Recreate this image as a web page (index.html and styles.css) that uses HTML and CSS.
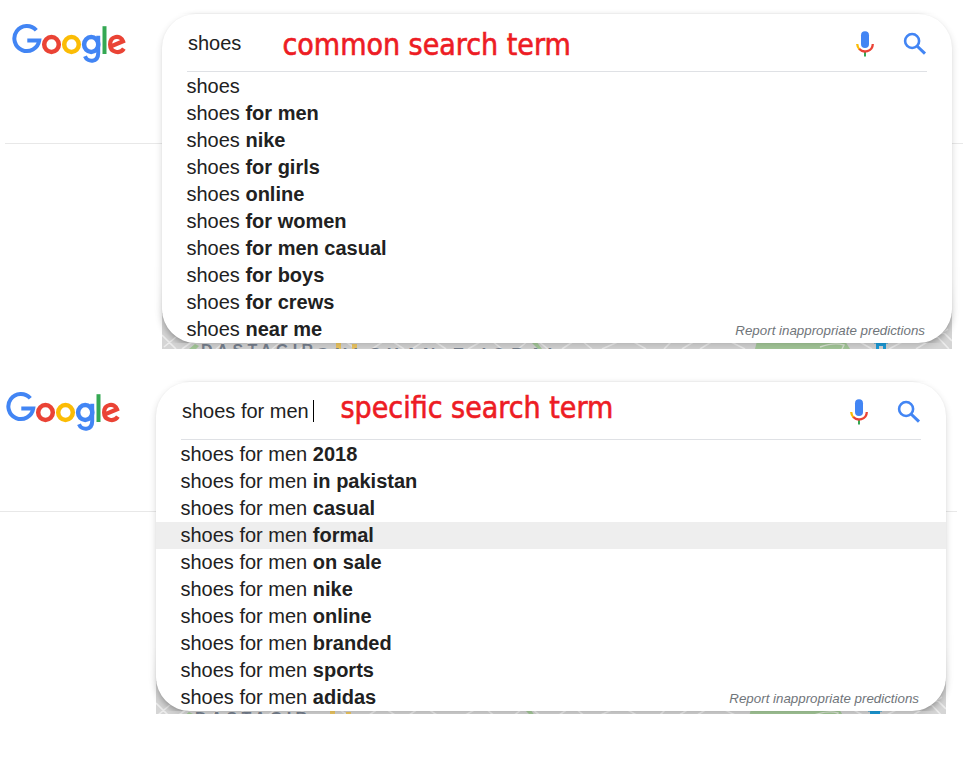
FILE: index.html
```html
<!DOCTYPE html>
<html lang="en">
<head>
<meta charset="utf-8">
<title>Search term suggestions</title>
<link rel="stylesheet" href="styles.css">
</head>
<body>
<svg class="defs" width="0" height="0" aria-hidden="true">
  <symbol id="logo" viewBox="0 0 120 44">
    <g fill="none" stroke-width="4.5">
      <path stroke="#4285f4" stroke-width="4" d="M24.3 7.300A12.500 12.500 0 1 0 27.200 17.600H15.300"/>
      <ellipse stroke="#ea4335" cx="39.5" cy="21.500" rx="7.3" ry="7.4"/>
      <ellipse stroke="#fbbc05" cx="59.5" cy="21.500" rx="7.3" ry="7.4"/>
      <path stroke="#4285f4" stroke-width="4" d="M86.200 12.700V30.200C86.200 39.500 75.500 39.800 73 33.200"/>
      <ellipse stroke="#4285f4" cx="79.200" cy="21.500" rx="7.1" ry="7.4"/>
      <path stroke="#34a853" stroke-width="4" d="M92.500 3.200V31"/>
      <path stroke="#ea4335" stroke-width="4.200" d="M98.400 23.600L111 18.300C108.600 11.400 98.100 12.800 98.100 21.500C98.100 29.800 108.200 31.200 111.900 25.700"/>
    </g>
  </symbol>
  <symbol id="mic" viewBox="0 0 24 28">
    <rect fill="#4285f4" x="8" y="1.3" width="8" height="16.7" rx="4"/>
    <path fill="#34a853" d="M11 21h2v5.5h-2z"/>
    <g fill="none" stroke-width="2.3">
      <path stroke="#fbbc05" d="M4.2 14Q4.4 17.3 6.6 19.5"/>
      <path stroke="#ea4335" d="M6.3 19.1C10 23.2 19.6 22.1 19.8 14"/>
    </g>
  </symbol>
  <symbol id="lens" viewBox="0 0 24 24">
    <g fill="none" stroke="#4285f4">
      <circle cx="9.100" cy="9" r="7" stroke-width="2.600"/>
      <path stroke-width="3" d="M14 14L22 21.700"/>
    </g>
  </symbol>
  <symbol id="map" viewBox="0 0 790 36">
    <rect width="790" height="36" fill="#d5d5d5"/>
    <g fill="none" stroke="#ececec" stroke-width="1.6">
      <path d="M0 22L14 36M2 34L14 24M20 36L34 26M54 36L64 28M92 36L84 28M110 36L120 28M138 36L150 28M194 36L180 26M210 36L222 28M230 28L242 36M250 36L262 28M272 28L284 36M306 36L320 28M330 28L340 36M356 36L366 28M376 28L386 36M400 36L412 28M420 28L430 36M440 36L458 28M470 28L484 36M502 36L510 28M520 36L533 28M538 36L551 28M567 28L583 36M598 36L610 28M615 28L625 36M633 36L643 28M696 28L710 36M727 36L742 28M754 36L786 16M770 18L787 36M777 15L790 28"/>
    </g>
    <path fill="#a5c99a" d="M595 28h88l5 8h-95zM368 28h6l6 8h-4zM27 36l6-5 4 2-3 3z"/>
    <path fill="none" stroke="#dce5d6" stroke-width="1.4" d="M658 34Q672 29 682 32L680 36"/>
    <path fill="#efc862" d="M174 30h5v6h-5zM190 31h5v5h-5z"/>
    <path fill="#1c9bd8" d="M712 28h14v2.500h-2V36h-3v-3h-4v3h-3v-5.500h-2z"/>
    <text x="39" y="43" font-size="16" textLength="112">DASTAGIR</text>
    <text x="154" y="46.500" font-size="17" textLength="242">GULSHAN-E-IQBAL</text>
  </symbol>
</svg>

<main>
  <section class="shot">
    <svg class="logo" role="img" aria-label="Google"><use href="#logo"/></svg>
    <div class="stage">
      <svg class="map"><use href="#map"/></svg>
      <div class="panel">
        <header class="bar">
          <span class="query">shoes</span>
          <strong class="note">common search term</strong>
          <svg class="mic"><use href="#mic"/></svg>
          <svg class="lens"><use href="#lens"/></svg>
        </header>
        <ul class="list">
          <li>shoes</li>
          <li>shoes <b>for men</b></li>
          <li>shoes <b>nike</b></li>
          <li>shoes <b>for girls</b></li>
          <li>shoes <b>online</b></li>
          <li>shoes <b>for women</b></li>
          <li>shoes <b>for men casual</b></li>
          <li>shoes <b>for boys</b></li>
          <li>shoes <b>for crews</b></li>
          <li>shoes <b>near me</b><span class="report">Report inappropriate predictions</span></li>
        </ul>
      </div>
    </div>
  </section>

  <section class="shot second">
    <svg class="logo" role="img" aria-label="Google"><use href="#logo"/></svg>
    <div class="stage">
      <svg class="map"><use href="#map"/></svg>
      <div class="panel">
        <header class="bar">
          <span class="query typing">shoes for men</span>
          <strong class="note">specific search term</strong>
          <svg class="mic"><use href="#mic"/></svg>
          <svg class="lens"><use href="#lens"/></svg>
        </header>
        <ul class="list">
          <li>shoes for men <b>2018</b></li>
          <li>shoes for men <b>in pakistan</b></li>
          <li>shoes for men <b>casual</b></li>
          <li class="active">shoes for men <b>formal</b></li>
          <li>shoes for men <b>on sale</b></li>
          <li>shoes for men <b>nike</b></li>
          <li>shoes for men <b>online</b></li>
          <li>shoes for men <b>branded</b></li>
          <li>shoes for men <b>sports</b></li>
          <li>shoes for men <b>adidas</b><span class="report">Report inappropriate predictions</span></li>
        </ul>
      </div>
    </div>
  </section>
</main>
</body>
</html>
```
FILE: styles.css
```css
* { box-sizing: border-box; }

body {
  margin: 0;
  background: #fff;
  color: #212121;
  font-family: "Liberation Sans", Arial, sans-serif;
  overflow: hidden;
}

.defs { position: absolute; }

main {
  height: 762px;
  padding-top: 14px;
}

.shot {
  display: flex;
  width: 963px;
  height: 368px;
  background: linear-gradient(#e8e8e8, #e8e8e8) 5px 129px / 958px 1px no-repeat;
}

.second { margin-left: -6px; }

.logo {
  flex: none;
  width: 120px;
  height: 44px;
  margin: 9px 30px 0 12px;
}

.stage {
  position: relative;
  flex: none;
  width: 790px;
  height: 335px;
  clip-path: inset(-14px -16px 0 -16px);
}

.second .stage { height: 332px; }

.map {
  position: absolute;
  left: 0;
  top: 299px;
  width: 790px;
  height: 36px;
}

.map, #map { overflow: hidden; }

#map text {
  fill: #77818f;
  font-weight: bold;
}

.panel {
  position: relative;
  height: 329px;
  overflow: hidden;
  background: #fff;
  border-radius: 34px;
}

.stage::before {
  content: "";
  position: absolute;
  z-index: 1;
  inset: 0 0 auto;
  height: 329px;
  border-radius: 34px;
  box-shadow: 0 3px 7px rgba(0, 0, 0, .32), 0 0 2px rgba(0, 0, 0, .1);
  mask: linear-gradient(rgba(0, 0, 0, .45), rgba(0, 0, 0, .5) 80%, #000) no-clip;
  pointer-events: none;
}

.bar {
  display: flex;
  align-items: center;
  height: 58px;
  margin: 0 25px 1px;
  border-bottom: 1px solid #dfe1e5;
}

.query {
  width: 95.500px;
  padding-left: 1px;
  font-size: 20px;
  line-height: 24px;
  white-space: nowrap;
  padding-top: 1px;
}

.query.typing { width: 159.500px; }

.typing::after {
  content: "";
  display: inline-block;
  width: 1px;
  height: 22px;
  margin-left: 4px;
  vertical-align: -4px;
  background: #000;
}

.note {
  margin-right: auto;
  padding-top: 4px;
  color: #ed1c24;
  font: 30px/36px "DejaVu Sans Condensed", "DejaVu Sans", sans-serif;
  font-stretch: condensed;
  -webkit-text-stroke: .6px #ed1c24;
  white-space: nowrap;
}

.second .note { padding: 0; margin-top: -6px; }

.mic {
  width: 24px;
  height: 28px;
  margin: 2px 26px 0 0;
}

.lens {
  width: 24px;
  height: 24px;
  margin: 2px 0 0;
}

.list {
  margin: 0;
  padding: 0;
  list-style: none;
}

.list li {
  display: flex;
  height: 27px;
  padding: 0 27px 0 24.500px;
  font-size: 20px;
  line-height: 27px;
  white-space: pre;
}

.list .active { background: #eee; }

.report {
  margin-left: auto;
  color: #70757a;
  font-size: 13.330px;
  font-style: italic;
  line-height: 29px;
}
```
